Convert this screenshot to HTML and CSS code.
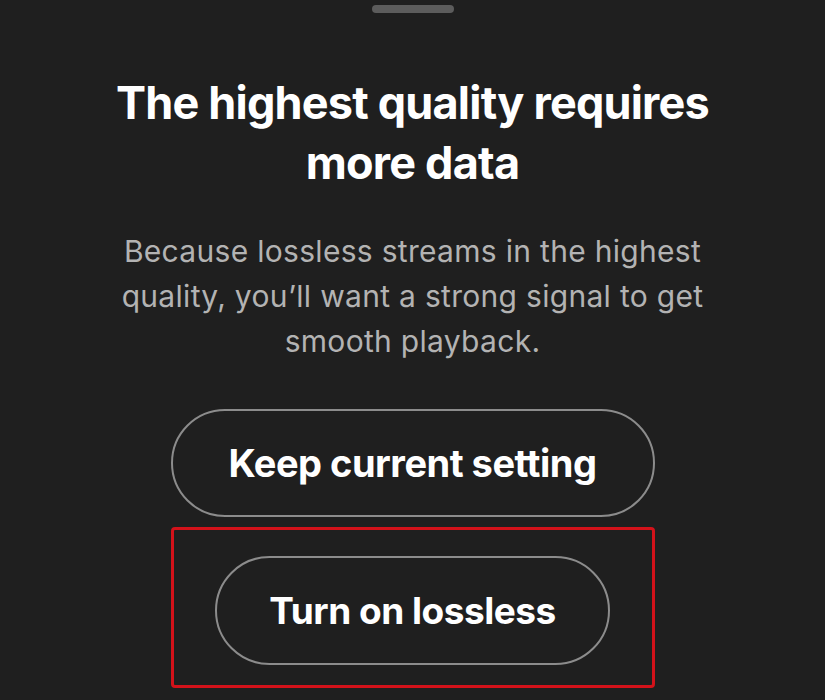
FILE: index.html
```html
<!DOCTYPE html>
<html lang="en">
<head>
  <meta charset="UTF-8">
  <meta name="viewport" content="width=device-width, initial-scale=1">
  <title>Lossless quality</title>
  <link rel="stylesheet" href="styles.css">
</head>
<body>

  <div class="sheet">
    <div class="handle"></div>

    <h1 class="title">The highest quality requires<br>more data</h1>

    <p class="desc">Because lossless streams in the highest quality, you’ll want a strong signal to get smooth playback.</p>

    <div class="actions">
      <button class="pill pill-wide">Keep current setting</button>
      <div class="highlight">
        <button class="pill">Turn on lossless</button>
      </div>
    </div>
  </div>

</body>
</html>
```

FILE: styles.css
```css
body {
  margin: 0;
  background-color: #1f1f1f;
  font-family: Inter, "Noto Sans", sans-serif;
  color: #ffffff;
}
.sheet {
  display: flex;
  flex-direction: column;
  align-items: center;
  height: 700px;
  overflow: hidden;
}
.sheet > * {
  flex-shrink: 0;
}
.handle {
  width: 82px;
  height: 8px;
  margin-top: 5px;
  border-radius: 4px;
  background-color: #5c5c5c;
}
.title {
  margin: 60px 0 0;
  font-size: 45px;
  font-weight: 700;
  line-height: 60px;
  letter-spacing: -0.8px;
  text-align: center;
}
.desc {
  width: 640px;
  margin: 36px 0 0;
  font-size: 30px;
  font-weight: 400;
  line-height: 45px;
  letter-spacing: 0.3px;
  color: #b3b3b3;
  text-align: center;
}
.actions {
  display: flex;
  flex-direction: column;
  align-items: center;
  gap: 10px;
  margin-top: 45px;
}
.actions > * {
  flex-shrink: 0;
}
.pill {
  display: block;
  height: 108px;
  padding: 0 40px;
  border: 2px solid #8c8c8c;
  border-radius: 55px;
  background: transparent;
  color: #ffffff;
  font-family: inherit;
  font-size: 38px;
  font-weight: 700;
  letter-spacing: -0.5px;
}
.pill-wide {
  width: 484px;
}
.highlight {
  box-sizing: border-box;
  width: 484px;
  height: 161px;
  padding: 26px 0 0;
  border: 3px solid #d3121a;
  border-radius: 4px;
  display: flex;
  justify-content: center;
  align-items: flex-start;
}
.highlight .pill {
  width: 395px;
  height: 109px;
  font-size: 37px;
}
```
